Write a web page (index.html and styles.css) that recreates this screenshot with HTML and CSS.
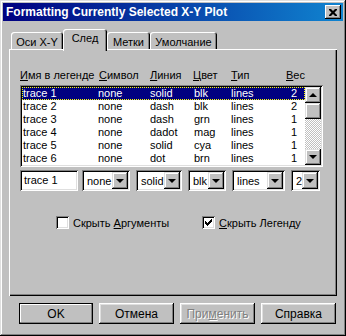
FILE: index.html
```html
<!DOCTYPE html>
<html lang="ru">
  <head>
    <meta charset="UTF-8" />
    <title>Formatting Currently Selected X-Y Plot</title>
    <link rel="stylesheet" href="styles.css">
  </head>
  <body>
    <div class="dialog">
      <div class="titlebar">
        <span class="title">Formatting Currently Selected X-Y Plot</span>
        <div class="close-btn">
          <svg width="8" height="7" viewBox="0 0 8 7">
            <path d="M0 0h2l2 2 2-2h2v1l-2.5 2.5L8 6v1H6L4 5 2 7H0V6l2.5-2.5L0 1z" fill="#000"></path>
          </svg>
        </div>
      </div>

      <div class="tabs">
        <div class="tab tab-wide">Оси X-Y</div>
        <div class="tab active">След</div>
        <div class="tab">Метки</div>
        <div class="tab tab-long">Умолчание</div>
      </div>

      <div class="panel">
        <!-- column headers -->
        <div class="headers">
          <span><u>И</u>мя в легенде</span>
          <span><u>С</u>имвол</span>
          <span><u>Л</u>иния</span>
          <span><u>Ц</u>вет</span>
          <span><u>Т</u>ип</span>
          <span><u>В</u>ес</span>
        </div>

        <div class="listbox">
          <div class="rows">
            <div class="row selected"><span>trace 1</span><span>none</span><span>solid</span><span>blk</span><span>lines</span><span class="num">2</span></div>
            <div class="row"><span>trace 2</span><span>none</span><span>dash</span><span>blk</span><span>lines</span><span class="num">2</span></div>
            <div class="row"><span>trace 3</span><span>none</span><span>dash</span><span>grn</span><span>lines</span><span class="num">1</span></div>
            <div class="row"><span>trace 4</span><span>none</span><span>dadot</span><span>mag</span><span>lines</span><span class="num">1</span></div>
            <div class="row"><span>trace 5</span><span>none</span><span>solid</span><span>cya</span><span>lines</span><span class="num">1</span></div>
            <div class="row"><span>trace 6</span><span>none</span><span>dot</span><span>brn</span><span>lines</span><span class="num">1</span></div>
          </div>
          <div class="scrollbar">
            <div class="sb-btn"><span class="arrow-up"></span></div>
            <div class="sb-thumb"></div>
            <div class="sb-track"></div>
            <div class="sb-btn"><span class="arrow-down"></span></div>
          </div>
        </div>

        <!-- edit row -->
        <div class="edit-row">
          <div class="field name-field">trace 1</div>
          <div class="combo w-none"><span class="combo-text">none</span><span class="combo-btn"><span class="arrow-down"></span></span></div>
          <div class="combo w-solid"><span class="combo-text">solid</span><span class="combo-btn"><span class="arrow-down"></span></span></div>
          <div class="combo w-blk"><span class="combo-text">blk</span><span class="combo-btn"><span class="arrow-down"></span></span></div>
          <div class="combo w-lines"><span class="combo-text">lines</span><span class="combo-btn"><span class="arrow-down"></span></span></div>
          <div class="combo w-num"><span class="combo-text">2</span><span class="combo-btn"><span class="arrow-down"></span></span></div>
        </div>

        <div class="checks">
          <label class="check first">
            <span class="box"></span>
            <span>Скрыть <u>А</u>ргументы</span>
          </label>
          <label class="check">
            <span class="box">
              <svg width="7" height="7" viewBox="0 0 7 7">
                <path d="M0 2h1v1h1v1h1v-1h1v-1h1v-1h1v-1h1v3h-1v1h-1v1h-1v1h-1v1h-1v-1h-1v-1h-1z" fill="#000"></path>
              </svg>
            </span>
            <span><u>С</u>крыть Легенду</span>
          </label>
        </div>
      </div>

      <div class="buttons">
        <div class="btn default">OK</div>
        <div class="btn">Отмена</div>
        <div class="btn disabled">При<u>м</u>енить</div>
        <div class="btn">Справка</div>
      </div>
    </div>
  </body>
</html>
```

FILE: styles.css
```css
* {
  margin: 0;
  padding: 0;
  box-sizing: border-box;
}

body {
  background-color: #c0c0c0;
  font-family: "Liberation Sans", Arial, sans-serif;
  font-size: 11px;
  color: #000;
}

u {
  text-decoration: underline;
  text-underline-offset: 1px;
}

/* Window frame */
.dialog {
  width: 346px;
  height: 336px;
  padding: 3px;
  background-color: #c0c0c0;
  box-shadow: inset -1px -1px #000, inset 1px 1px #dfdfdf,
    inset -2px -2px #808080, inset 2px 2px #fff;
}

.titlebar {
  height: 18px;
  display: flex;
  align-items: center;
  justify-content: space-between;
  padding: 0 2px 0 3px;
  background: linear-gradient(to right, #000080, #1084d0);
}

.title {
  color: #fff;
  font-weight: bold;
  font-size: 12px;
}

.close-btn {
  width: 16px;
  height: 14px;
  background-color: #c0c0c0;
  display: flex;
  align-items: center;
  justify-content: center;
  box-shadow: inset -1px -1px #000, inset 1px 1px #fff,
    inset -2px -2px #808080;
}

/* Tabs */
.tabs {
  height: 28px;
  display: flex;
  align-items: flex-end;
  padding-left: 8px;
}

.tab {
  width: 43px;
  height: 17px;
  display: flex;
  align-items: center;
  justify-content: center;
  padding-top: 2px;
  border-radius: 3px 3px 0 0;
  box-shadow: inset 1px 1px #fff, inset -1px 0 #000, inset -2px 0 #808080;
}

.tab-wide {
  width: 52px;
}

.tab-long {
  width: 67px;
}

.tab.active {
  width: 44px;
  height: 22px;
  margin-bottom: -2px;
  padding: 0 0 4px;
  position: relative;
  z-index: 1;
  background-color: #c0c0c0;
}

/* Tab page */
.panel {
  height: 247px;
  margin: 0 6px;
  padding: 20px 0 0 11px;
  box-shadow: inset 1px 1px #fff, inset -1px -1px #000, inset -2px -2px #808080;
}

.headers {
  display: grid;
  grid-template-columns: 79px 51px 43px 38px 55px auto;
  height: 13px;
  line-height: 13px;
}

.listbox {
  width: 303px;
  height: 82px;
  margin-top: 3px;
  padding: 2px;
  display: flex;
  background-color: #fff;
  box-shadow: inset 1px 1px #808080, inset -1px -1px #fff,
    inset 2px 2px #000, inset -2px -2px #dfdfdf;
}

.rows {
  flex: 1;
}

.row {
  display: grid;
  grid-template-columns: 75px 52px 44px 37px 1fr 20px;
  height: 13px;
  line-height: 13px;
  padding: 0 8px 0 1px;
}

.row .num {
  text-align: right;
}

.row.selected {
  background-color: #000080;
  color: #fff;
  outline: 1px dotted #ffff00;
  outline-offset: -1px;
}

/* Scrollbar */
.scrollbar {
  width: 16px;
  display: flex;
  flex-direction: column;
}

.sb-btn,
.sb-thumb {
  height: 16px;
  background-color: #c0c0c0;
  display: flex;
  align-items: center;
  justify-content: center;
  box-shadow: inset -1px -1px #000, inset 1px 1px #dfdfdf,
    inset -2px -2px #808080, inset 2px 2px #fff;
}

.sb-track {
  flex: 1;
  background: repeating-conic-gradient(#c0c0c0 0 25%, #fff 0 50%) 0 0 / 2px 2px;
}

.arrow-up,
.arrow-down {
  width: 0;
  height: 0;
  border-left: 4px solid transparent;
  border-right: 4px solid transparent;
}

.arrow-up {
  border-bottom: 4px solid #000;
}

.arrow-down {
  border-top: 4px solid #000;
}

/* Edit row */
.edit-row {
  display: flex;
  gap: 6px;
  margin-top: 3px;
  height: 21px;
}

.field,
.combo {
  height: 21px;
  background-color: #fff;
  padding: 2px;
  display: flex;
  align-items: center;
  box-shadow: inset 1px 1px #808080, inset -1px -1px #fff,
    inset 2px 2px #000, inset -2px -2px #dfdfdf;
}

.name-field {
  width: 58px;
  margin-right: -2px;
  padding-left: 4px;
  padding-bottom: 3px;
}

.combo-text {
  flex: 1;
  padding-left: 3px;
}

.combo-btn {
  width: 16px;
  height: 17px;
  background-color: #c0c0c0;
  display: flex;
  align-items: center;
  justify-content: center;
  box-shadow: inset -1px -1px #000, inset 1px 1px #dfdfdf,
    inset -2px -2px #808080, inset 2px 2px #fff;
}

.w-none {
  width: 48px;
}

.w-solid {
  width: 46px;
}

.w-blk {
  width: 38px;
}

.w-lines {
  width: 53px;
}

.w-num {
  width: 29px;
}

/* Checkboxes */
.checks {
  display: flex;
  margin-top: 25px;
  padding-left: 36px;
}

.check {
  display: flex;
  align-items: center;
  gap: 4px;
  height: 13px;
}

.check.first {
  width: 146px;
}

.box {
  width: 13px;
  height: 13px;
  background-color: #fff;
  display: flex;
  align-items: center;
  justify-content: center;
  box-shadow: inset 1px 1px #808080, inset -1px -1px #fff,
    inset 2px 2px #000, inset -2px -2px #dfdfdf;
}

/* Bottom buttons */
.buttons {
  display: flex;
  gap: 6px;
  margin: 7px 0 0 16px;
  font-size: 12px;
}

.btn {
  width: 75px;
  height: 21px;
  display: flex;
  align-items: center;
  justify-content: center;
  background-color: #c0c0c0;
  box-shadow: inset -1px -1px #000, inset 1px 1px #fff,
    inset -2px -2px #808080, inset 2px 2px #dfdfdf;
}

.btn.default {
  width: 74px;
  box-shadow: inset 0 0 0 1px #000, inset -2px -2px #808080,
    inset 2px 2px #fff;
}

.btn.disabled {
  color: #808080;
  text-shadow: 1px 1px #fff;
}
```
